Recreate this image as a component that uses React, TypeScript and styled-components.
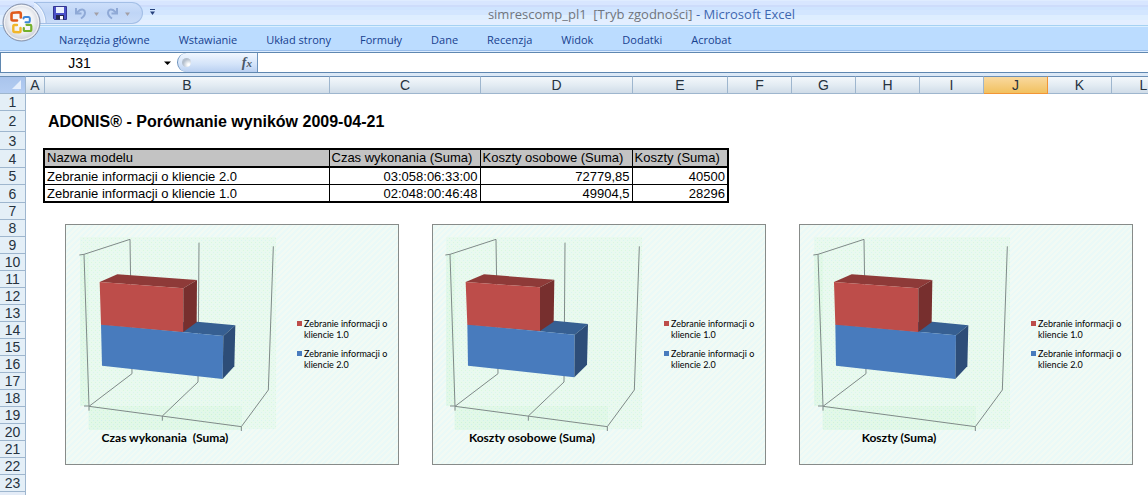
import React from "react";
import styled, { createGlobalStyle } from "styled-components";

const GlobalStyle = createGlobalStyle`
  * { box-sizing: border-box; }
  body { margin: 0; background: #fff; overflow: hidden; }
  button, input { font: inherit; border: 0; margin: 0; padding: 0; background: none; color: inherit; }
`;

const uiFont = `"Open Sans", "Noto Sans", sans-serif`;
const sheetFont = `"Liberation Sans", Arial, sans-serif`;
const chartFont = `Lato, sans-serif`;

const Window = styled.div`
  position: relative;
  min-height: 100vh;
  display: flex;
  flex-direction: column;
  font-family: ${sheetFont};
`;

/* ---------- title bar and ribbon ---------- */

const TitleBar = styled.header`
  display: flex;
  height: 27px;
  padding-left: 34px;
  border-bottom: 1px solid #dcefff;
  box-shadow: inset 0 -1px 0 #a6d2f2;
  background: linear-gradient(#dfecff 0 1px, #d8e6ff 1px 5px, #cddcfb 5px 7px, #cfe4ff 7px 10px, #d3e6ff 10px 15px, #deeeff 15px 20px, #e3eeff 20px);
`;

const QuickAccess = styled.div`
  display: flex;
  align-items: center;
  width: 109px;
  height: 22px;
  margin-top: 2px;
  padding-left: 17px;
  border: 1px solid #a3bfe6;
  border-left: 0;
  border-radius: 0 11px 11px 0;
  background:
    radial-gradient(circle at -13px 20px, #deeafd 23px, #f4f9ff 24px, #a3bfe6 25px, transparent 26px),
    linear-gradient(#cddffa, #bfd5f6 50%, #c9dcf8);
`;

const IconButton = styled.button<{ $w: number }>`
  display: flex;
  align-items: center;
  justify-content: center;
  width: ${(p) => p.$w}px;
  height: 18px;
`;

const CustomizeButton = styled(IconButton)`
  margin: 3px 0 0 1px;
`;

const WindowTitle = styled.h1`
  flex: 1;
  margin: 0;
  padding-right: 26px;
  text-align: center;
  white-space: pre;
  font: 400 13px/28px ${uiFont};
  color: #3f68b0;
`;

const FileName = styled.span`
  color: #70757d;
`;

const OfficeButton = styled.button`
  position: absolute;
  left: 1px;
  top: 2px;
  width: 40px;
  height: 40px;
`;

const Tabs = styled.nav`
  display: flex;
  gap: 1px;
  height: 25px;
  padding: 2px 0 0 45px;
  background: #bbdcff;
  border-bottom: 1px solid #dcecff;
  box-shadow: inset 0 -1px 0 #98bdea;
`;

const Tab = styled.button`
  padding: 0 14px;
  font: 400 11px/22px ${uiFont};
  color: #17418f;
  white-space: nowrap;
`;

/* ---------- formula bar ---------- */

const FormulaBar = styled.div`
  display: flex;
  height: 21px;
  border-top: 1px solid #5f87b0;
  border-bottom: 1px solid #5f87b0;
  background: #fff;
`;

const NameBox = styled.input`
  width: 158px;
  border-left: 1px solid #5f87b0;
  text-align: center;
  font-size: 14px;
`;

const NameArrow = styled.button`
  display: flex;
  align-items: center;
  justify-content: center;
  width: 19px;
`;

const FxPanel = styled.div`
  display: flex;
  align-items: center;
  justify-content: space-between;
  width: 81px;
  padding: 0 5px 0 4px;
  border: 0 solid #6d93bd;
  border-width: 0 1px;
  border-radius: 10px 0 0 10px;
  background: linear-gradient(#f1f7ff, #d3e3f9 60%, #b9d0f1);
`;

const Knob = styled.span`
  width: 9px;
  height: 9px;
  border-radius: 50%;
  background: radial-gradient(circle at 75% 75%, #fff 10%, #b4bfcd 60%);
`;

const FxButton = styled.button`
  font: italic 700 14px/18px "Liberation Serif", serif;
  color: #4a5666;
`;

const FxSub = styled.span`
  font-size: 11px;
`;

const FormulaInput = styled.input`
  flex: 1;
  min-width: 0;
`;

/* ---------- sheet ---------- */

const ColumnHeads = styled.div`
  display: flex;
  height: 21px;
  border-top: 3px solid #dce9f7;
  overflow: hidden;
`;

const headFill = `linear-gradient(#f4f8fb, #e3ecf3 50%, #d0dce8)`;

const ColumnHead = styled.div<{ $w: number; $active?: boolean }>`
  flex: none;
  width: ${(p) => p.$w}px;
  border: solid ${(p) => (p.$active ? "#f29536" : "#9eb6ce")};
  border-width: 1px 1px 1px 0;
  border-top-color: #6b8fb5;
  background: ${(p) => (p.$active ? "linear-gradient(#f9d99f, #f1c15f)" : headFill)};
  text-align: center;
  font-size: 14px;
  line-height: 17px;
  color: #26333f;
`;

const SelectAll = styled.button`
  display: flex;
  flex: none;
  align-items: flex-end;
  justify-content: flex-end;
  width: 26px;
  padding: 0 4px 4px 0;
  border: solid #9eb6ce;
  border-top-color: #6b8fb5;
  border-width: 1px 1px 1px 0;
  background: linear-gradient(#a9c4ec, #b4cdf2);
`;

const Sheet = styled.main`
  display: flex;
  flex: 1;
`;

const RowHeads = styled.div`
  flex: none;
  width: 26px;
  border-right: 1px solid #9eb6ce;
  background: #e4ecf7;
`;

const RowHead = styled.div<{ $h: number }>`
  display: flex;
  align-items: center;
  justify-content: center;
  height: ${(p) => p.$h}px;
  border-bottom: 1px solid #9eb6ce;
  background: #e4eff7;
  font-size: 14px;
  color: #26333f;
`;

const Cells = styled.div`
  flex: 1;
  min-width: 0;
  padding: 17px 0 0 17px;
  overflow: hidden;
`;

const SheetTitle = styled.h2`
  margin: 0 0 16px 5px;
  font-size: 16px;
  line-height: 21px;
  color: #000;
`;

const DataTable = styled.table`
  table-layout: fixed;
  width: 684px;
  border-collapse: collapse;
  border: 2px solid #000;
  font-size: 13px;
  line-height: 16px;
  color: #000;
`;

const HeadCell = styled.th`
  height: 18px;
  padding: 0 2px;
  border: 1px solid #000;
  border-bottom-width: 2px;
  background: #c3c3c3;
  text-align: left;
  font-weight: 400;
  white-space: nowrap;
`;

const Cell = styled.td<{ $num?: boolean }>`
  height: 17px;
  padding: 2px 2px 0;
  border: 1px solid #000;
  line-height: 14px;
  text-align: ${(p) => (p.$num ? "right" : "left")};
`;

const Charts = styled.div`
  display: flex;
  gap: 33px;
  padding: 21px 0 0 22px;
`;

/* ---------- charts ---------- */

const ChartCard = styled.figure`
  display: flex;
  flex: none;
  width: 334px;
  height: 241px;
  margin: 0;
  border: 1px solid #878b89;
  background: repeating-linear-gradient(135deg, #f2faf4 0 2px, #eaf9f7 2px 4px);
  font-family: ${chartFont};
  color: #000;
`;

const PlotColumn = styled.div`
  width: 231px;
`;

const PlotTitle = styled.figcaption`
  width: 198px;
  text-align: center;
  font-size: 12px;
  line-height: 14px;
  font-weight: 700;
  white-space: pre;
`;

const Legend = styled.ul`
  display: flex;
  flex: 1;
  flex-direction: column;
  gap: 8px;
  margin: 0;
  padding: 93px 0 0;
  list-style: none;
`;

const LegendItem = styled.li`
  display: flex;
  gap: 2px;
  font-size: 9px;
  line-height: 11px;
`;

const Swatch = styled.span<{ $color: string }>`
  flex: none;
  width: 5px;
  height: 5px;
  margin-top: 3px;
  background: ${(p) => p.$color};
`;

type Bars = {
  title: string;
  shift: number;
  midLine: boolean;
  red: [string, string, string];
  blue: [string, string, string];
};

/* Bar faces are listed as front, top, side. */
const charts: Bars[] = [
  {
    title: "Czas wykonania  (Suma)",
    shift: 0,
    midLine: true,
    red: ["104,174 355,193 355,324 108,302", "104,174 157,151 396,168 355,193", "355,193 396,168 395,295 355,324"],
    blue: ["108,301 475,336 473,465 111,425", "108,301 396,293 511,304 475,336", "475,336 511,304 508,427 473,465"],
  },
  {
    title: "Koszty osobowe (Suma)",
    shift: -3,
    midLine: true,
    red: ["101,174 324,190 324,321 106,302", "101,174 156,151 367,167 324,190", "324,190 367,167 365,293 324,321"],
    blue: ["106,301 428,332 427,460 108,425", "106,301 367,290 468,300 428,332", "428,332 468,300 465,422 427,460"],
  },
  {
    title: "Koszty (Suma)",
    shift: 0,
    midLine: false,
    red: ["105,174 358,193 358,324 109,302", "105,174 158,151 400,168 358,193", "358,193 400,168 398,295 358,324"],
    blue: ["109,301 471,334 469,465 111,425", "109,301 400,293 508,304 471,334", "471,334 508,304 505,427 469,465"],
  },
];

function Plot({ c }: { c: Bars }) {
  const [redFront, redTop, redSide] = c.red;
  const [blueFront, blueTop, blueSide] = c.blue;
  return (
    <svg width="231" height="206" viewBox="3 3 693 618" display="block" aria-hidden="true">
      <defs>
        <pattern id="tint" width="12" height="12" patternUnits="userSpaceOnUse">
          <rect width="12" height="12" fill="#e9f9ef" />
          <rect width="3" height="3" fill="#d9f5f0" />
          <rect x="6" y="6" width="3" height="3" fill="#d9f8de" />
        </pattern>
        <pattern id="floor" width="12" height="12" patternUnits="userSpaceOnUse">
          <rect width="12" height="12" fill="#e2f8e8" />
          <rect width="3" height="3" fill="#d0f1ec" />
          <rect x="6" y="6" width="3" height="3" fill="#cff5d6" />
        </pattern>
      </defs>
      <g transform={`translate(${c.shift} 0)`}>
        <path d="M45 39H633V615H69V546H45Z" fill="url(#tint)" />
        <path d="M45 90H72V546H531V618H72V546H45Z" fill="url(#floor)" />
        <g fill="none" stroke="#7f8a88" strokeWidth="3">
          <path d="M43 93L57 91L195 46L201 449L72 547" />
          <path d="M57 91L72 547V560M57 546H72" />
          {c.midLine && <path d="M402 56L399 474L292 576V590" />}
          <path d="M625 67L610 498L529 608V622M72 547L529 608" />
        </g>
      </g>
      <polygon points={blueTop} fill="#365f92" />
      <polygon points={blueFront} fill="#487bbd" />
      <polygon points={blueSide} fill="#2d4d78" />
      <polygon points={redTop} fill="#8e3a38" />
      <polygon points={redFront} fill="#bd4d4a" />
      <polygon points={redSide} fill="#772f2e" />
    </svg>
  );
}

function Chart({ c }: { c: Bars }) {
  return (
    <ChartCard>
      <PlotColumn>
        <Plot c={c} />
        <PlotTitle>{c.title}</PlotTitle>
      </PlotColumn>
      <Legend>
        <LegendItem>
          <Swatch $color="#bd4d4a" />
          <span>Zebranie informacji o<br />kliencie 1.0</span>
        </LegendItem>
        <LegendItem>
          <Swatch $color="#487bbd" />
          <span>Zebranie informacji o<br />kliencie 2.0</span>
        </LegendItem>
      </Legend>
    </ChartCard>
  );
}

function OfficeLogo() {
  return (
    <svg width="40" height="40" viewBox="0 0 40 40" display="block" aria-hidden="true">
      <defs>
        <radialGradient id="orb" cx="50%" cy="45%" r="58%">
          <stop offset="0" stopColor="#ffffff" />
          <stop offset="0.55" stopColor="#f1f2f5" />
          <stop offset="0.85" stopColor="#cdd1da" />
          <stop offset="1" stopColor="#e4e7ee" />
        </radialGradient>
      </defs>
      <circle cx="20.5" cy="20.5" r="18.5" fill="url(#orb)" stroke="#8592ab" />
      <circle cx="20.5" cy="20.5" r="17" fill="none" stroke="#fff" strokeOpacity="0.8" />
      <g fill="none" strokeLinejoin="round" strokeLinecap="round">
        <path d="M16 18.500H12Q10.500 18.500 10.500 17V12.500Q10.500 11 12 10.800L18 10.300Q19.800 10.300 19.800 12V15.500" stroke="#e05a1b" strokeWidth="2.600" />
        <path d="M22.500 16.500Q22.500 15 24 15H27.500Q28.800 15 28.800 16.500V19Q28.800 20.300 27.500 20.300H24.500" stroke="#3b86d8" strokeWidth="2" />
        <path d="M16 23H13.500Q12.300 23 12.300 24.500V28.500Q12.300 30 13.500 30L18 30.300Q19.500 30.300 19.500 29V26" stroke="#f1b62a" strokeWidth="2.400" />
        <path d="M25.500 22.800H29Q30.300 22.800 30.300 24V27.500Q30.300 29 29 29H24Q22.800 29 22.800 27.500V26" stroke="#74b02b" strokeWidth="2.200" />
      </g>
    </svg>
  );
}

function SaveIcon() {
  return (
    <svg width="14" height="14" viewBox="0 0 14 14" aria-hidden="true">
      <path d="M0.500 0.500H13.500V13.500H1.500L0.500 12.500Z" fill="#4a50c8" stroke="#33358f" />
      <rect x="3" y="1" width="8" height="6" fill="#e9f0fd" />
      <rect x="3" y="9" width="8" height="4.500" fill="#23264f" />
      <rect x="7" y="10" width="3" height="3.500" fill="#fff" />
    </svg>
  );
}

function UndoIcon({ flip }: { flip?: boolean }) {
  return (
    <svg width="13" height="13" viewBox="0 0 13 13" aria-hidden="true">
      <g transform={flip ? "translate(13 0) scale(-1 1)" : undefined} fill="none" stroke="#8fa9d6" strokeWidth="2">
        <path d="M2 1V6.500H7.500" />
        <path d="M2.500 6L6 3Q10.500 1.500 11 5.500Q11 9 7 11.500" />
      </g>
    </svg>
  );
}

function Arrow({ color, w = 5, bar }: { color: string; w?: number; bar?: boolean }) {
  return (
    <svg width={w} height="7" viewBox="0 0 10 14" preserveAspectRatio="none" aria-hidden="true" fill={color}>
      {bar && <rect width="10" height="2" />}
      <path d="M0 5H10L5 12Z" />
    </svg>
  );
}

const tabs = ["Narzędzia główne", "Wstawianie", "Układ strony", "Formuły", "Dane", "Recenzja", "Widok", "Dodatki", "Acrobat"];

const columns: [string, number][] = [
  ["A", 19], ["B", 285], ["C", 151], ["D", 152], ["E", 95], ["F", 64],
  ["G", 64], ["H", 64], ["I", 64], ["J", 64], ["K", 64], ["L", 64],
];

const rowHeights = [17, 21, 18, 18, 17, 18, ...Array(17).fill(17)];

const rows = [
  ["Zebranie informacji o kliencie 2.0", "03:058:06:33:00", "72779,85", "40500"],
  ["Zebranie informacji o kliencie 1.0", "02:048:00:46:48", "49904,5", "28296"],
];

export default function App() {
  return (
    <Window>
      <GlobalStyle />
      <TitleBar>
        <QuickAccess>
          <IconButton $w={17} aria-label="Zapisz"><SaveIcon /></IconButton>
          <IconButton $w={25} aria-label="Cofnij"><UndoIcon /></IconButton>
          <IconButton $w={7} aria-label="Lista cofania"><Arrow color="#a39fa5" /></IconButton>
          <IconButton $w={24} aria-label="Wykonaj ponownie"><UndoIcon flip /></IconButton>
          <IconButton $w={7} aria-label="Lista ponowień"><Arrow color="#a39fa5" /></IconButton>
        </QuickAccess>
        <CustomizeButton $w={17} aria-label="Dostosuj pasek"><Arrow color="#27427c" bar /></CustomizeButton>
        <WindowTitle>
          <FileName>simrescomp_pl1  [Tryb zgodności]</FileName> - Microsoft Excel
        </WindowTitle>
      </TitleBar>
      <Tabs>
        {tabs.map((t) => <Tab key={t}>{t}</Tab>)}
      </Tabs>
      <OfficeButton aria-label="Przycisk pakietu Office"><OfficeLogo /></OfficeButton>

      <FormulaBar>
        <NameBox aria-label="Pole nazwy" defaultValue="J31" />
        <NameArrow aria-label="Lista nazw"><Arrow color="#000" w={7} /></NameArrow>
        <FxPanel>
          <Knob />
          <FxButton aria-label="Wstaw funkcję">f<FxSub>x</FxSub></FxButton>
        </FxPanel>
        <FormulaInput aria-label="Pasek formuły" />
      </FormulaBar>

      <ColumnHeads>
        <SelectAll aria-label="Zaznacz wszystko">
          <svg width="9" height="9" viewBox="0 0 9 9" aria-hidden="true"><path d="M9 0V9H0Z" fill="#e6effc" /></svg>
        </SelectAll>
        {columns.map(([name, w]) => (
          <ColumnHead key={name} $w={w} $active={name === "J"}>{name}</ColumnHead>
        ))}
      </ColumnHeads>

      <Sheet>
        <RowHeads>
          {rowHeights.map((h, i) => <RowHead key={i} $h={h}>{i + 1}</RowHead>)}
        </RowHeads>
        <Cells>
          <SheetTitle>ADONIS® - Porównanie wyników 2009-04-21</SheetTitle>
          <DataTable>
            <colgroup>
              <col width="285" /><col width="151" /><col width="152" /><col width="96" />
            </colgroup>
            <thead>
              <tr>
                <HeadCell>Nazwa modelu</HeadCell>
                <HeadCell>Czas wykonania (Suma)</HeadCell>
                <HeadCell>Koszty osobowe (Suma)</HeadCell>
                <HeadCell>Koszty (Suma)</HeadCell>
              </tr>
            </thead>
            <tbody>
              {rows.map((r) => (
                <tr key={r[0]}>
                  {r.map((v, i) => <Cell key={i} $num={i > 0}>{v}</Cell>)}
                </tr>
              ))}
            </tbody>
          </DataTable>
          <Charts>
            {charts.map((c) => <Chart key={c.title} c={c} />)}
          </Charts>
        </Cells>
      </Sheet>
    </Window>
  );
}
